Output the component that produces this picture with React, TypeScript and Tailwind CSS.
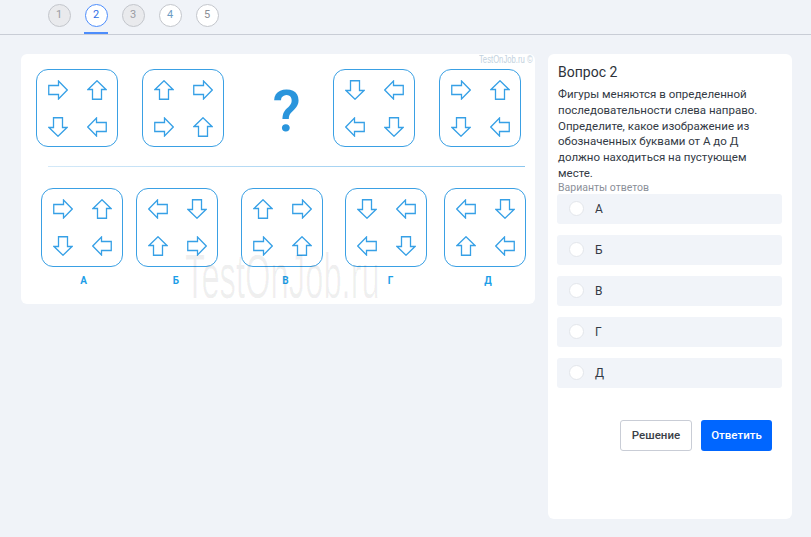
type Dir = "r" | "l" | "u" | "d"

const rot: Record<Dir, number> = { r: 0, d: 90, l: 180, u: -90 }

const Arrow = ({ dir }: { dir: Dir }) => (
  <svg width="20" height="20" viewBox="0 0 20 20">
    <g transform={`rotate(${rot[dir]} 10 10)`}>
      <path
        d="M0.75 5.5 H10.5 V1 L19.25 10 L10.5 19 V14.5 H0.75 Z"
        fill="white"
        stroke="#36a0e6"
        strokeWidth="1.3"
        strokeLinejoin="miter"
      />
    </g>
  </svg>
)

const Figure = ({ arrows, h = "h-[78px]" }: { arrows: Dir[]; h?: string }) => (
  <div className={`w-[82px] ${h} shrink-0 rounded-[12px] border-[1.5px] border-[#3aa0e4] grid grid-cols-2 grid-rows-2 place-items-center p-[1px]`}>
    {arrows.map((a, i) => (
      <Arrow key={i} dir={a} />
    ))}
  </div>
)

const Answer = ({ arrows, label, ml, shift }: { arrows: Dir[]; label: string; ml: string; shift: string }) => (
  <div className={`flex flex-col items-center shrink-0 ${ml}`}>
    <Figure arrows={arrows} h="h-[79px]" />
    <span className={`mt-[8px] text-[10px] leading-[12px] font-bold text-[#1c9ee8] ${shift}`}>{label}</span>
  </div>
)

const steps = [
  { n: 1, cls: "bg-[#e9eaed] border-[#c3c6cc] text-[#9a9ca3]" },
  { n: 2, cls: "bg-white border-[#4d8dfc] text-[#2f6fe6]", active: true },
  { n: 3, cls: "bg-[#e9eaed] border-[#c3c6cc] text-[#9a9ca3]" },
  { n: 4, cls: "bg-white border-[#c3c6cc] text-[#6c9cc4]" },
  { n: 5, cls: "bg-white border-[#c3c6cc] text-[#8b8e95]" },
]

const options = ["А", "Б", "В", "Г", "Д"]

export default function App() {
  return (
    <div className="w-[811px] h-[537px] bg-[#f0f3f8] font-['Roboto',sans-serif] overflow-hidden">
      {/* step nav */}
      <div className="h-[35px] border-b border-[#c9cdd6] flex pl-[47px] gap-[13px]">
        {steps.map((s) => (
          <div key={s.n} className="flex flex-col items-center h-[34px] pt-[4px]">
            <div className={`w-[23px] h-[23px] rounded-full border flex items-center justify-center text-[11px] ${s.cls}`}>
              {s.n}
            </div>
            <div className="flex-1" />
            <div className={`h-[2px] w-[24px] ${s.active ? "bg-[#4d8dfc]" : ""}`} />
          </div>
        ))}
      </div>

      <div className="flex pl-[21px] pt-[19px] gap-[13px] items-start">
        {/* puzzle */}
        <div className="relative w-[514px] h-[250px] shrink-0 bg-white rounded-[6px] pt-[15px]">
          <span className="absolute top-[0px] right-[2px] text-[10px] leading-[12px] text-[#c3d2de] font-['Liberation_Sans',sans-serif] scale-x-[0.77] origin-right whitespace-nowrap">
            TestOnJob.ru ©
          </span>
          <div className="flex items-center pl-[15px]">
            <Figure arrows={["r", "u", "d", "l"]} />
            <div className="ml-[24px]">
              <Figure arrows={["u", "r", "r", "u"]} />
            </div>
            <div className="w-[109px] flex justify-center pl-[16px]">
              <span className="text-[58px] leading-none font-medium text-[#2a95dc] mt-[6px]">?</span>
            </div>
            <Figure arrows={["d", "l", "l", "d"]} />
            <div className="ml-[24px]">
              <Figure arrows={["r", "u", "d", "l"]} />
            </div>
          </div>
          <div className="mt-[19px] ml-[27px] w-[477px] h-[1px] bg-gradient-to-r from-[#d4e9f8] to-[#8ac6ee]" />
          <div className="flex mt-[21px] pl-[20px]">
            <Answer arrows={["r", "u", "d", "l"]} label="А" ml="" shift="ml-[3px]" />
            <Answer arrows={["l", "d", "u", "r"]} label="Б" ml="ml-[13px]" shift="mr-[2px]" />
            <Answer arrows={["u", "r", "r", "u"]} label="В" ml="ml-[23px]" shift="ml-[7px]" />
            <Answer arrows={["d", "l", "l", "d"]} label="Г" ml="ml-[22px]" shift="ml-[9px]" />
            <Answer arrows={["l", "d", "u", "l"]} label="Д" ml="ml-[17px]" shift="ml-[6px]" />
          </div>
          <span className="pointer-events-none absolute left-[164px] top-[191px] text-[63px] leading-[63px] text-black/[0.06] font-['Liberation_Sans',sans-serif] scale-x-[0.52] origin-left whitespace-nowrap">
            TestOnJob.ru
          </span>
        </div>

        {/* question */}
        <div className="w-[244px] h-[465px] shrink-0 bg-white rounded-[6px] pt-[9px] pl-[9px] pr-[10px] flex flex-col">
          <h2 className="pl-[1px] text-[14px] leading-[18px] text-[#2d323a]">Вопрос 2</h2>
          <p className="pl-[1px] pr-[8px] mt-[6px] text-[11.5px] leading-[15.8px] text-[#333a45]">
            Фигуры меняются в определенной последовательности слева направо. Определите, какое изображение из
            обозначенных буквами от А до Д должно находиться на пустующем месте.
          </p>
          <span className="pl-[1px] text-[10.5px] leading-[12px] text-[#8b9099]">Варианты ответов</span>
          <div className="flex flex-col gap-[11px]">
            {options.map((o) => (
              <label key={o} className="h-[30px] rounded-[3px] bg-[#f1f4f9] flex items-center pl-[12px]">
                <span className="w-[15px] h-[15px] rounded-full bg-white border border-[#e3e6eb]" />
                <span className="ml-[11px] text-[12px] text-[#333a45]">{o}</span>
              </label>
            ))}
          </div>
          <div className="flex justify-end gap-[9px] mt-[32px] mr-[10px]">
            <button className="w-[72px] h-[31px] rounded-[3px] border border-[#c9cdd6] bg-white text-[11.5px] font-medium text-[#3a3f48]">
              Решение
            </button>
            <button className="w-[71px] h-[31px] rounded-[3px] bg-[#0066ff] text-[11.5px] font-medium text-white">
              Ответить
            </button>
          </div>
        </div>
      </div>
    </div>
  )
}
